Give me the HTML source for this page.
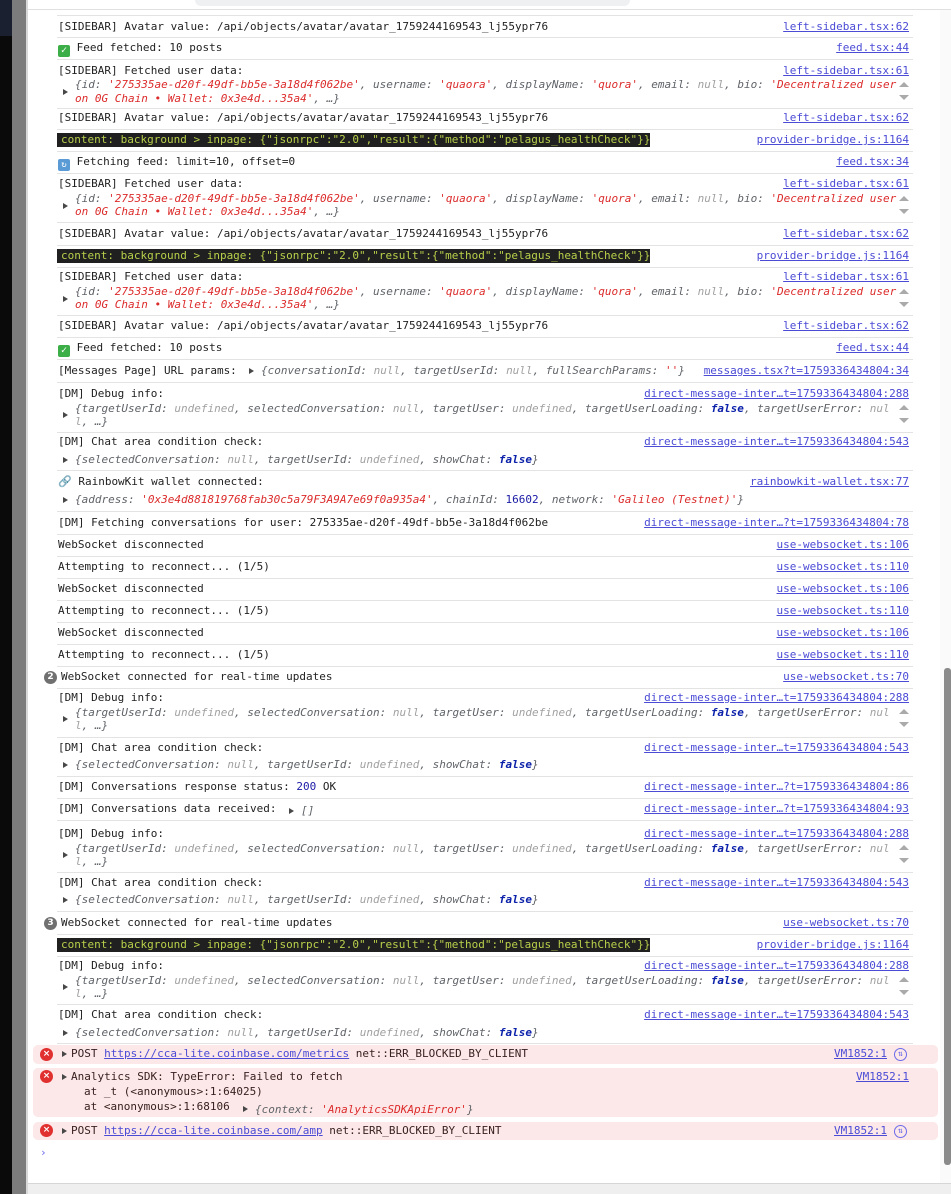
<!DOCTYPE html>
<html><head><meta charset="utf-8"><style>
*{margin:0;padding:0;box-sizing:border-box}
body{width:951px;height:1194px;position:relative;overflow:hidden;background:#fff;font-family:"DejaVu Sans Mono","Liberation Mono",monospace;font-size:11px;color:#1f1f1f}
.a{position:absolute}
.l{position:absolute;white-space:pre;line-height:14px;left:58px}
.o{left:75px;font-style:italic;color:#5f6368}
.k{position:absolute;right:42px;white-space:pre;line-height:14px;color:#4b4bd6;text-decoration:underline}
.s{color:#dc2b2b}.n{color:#a0a0a0}.b{color:#0d22aa;font-weight:bold}.num{color:#1a1aa6;font-style:normal}
.sep{position:absolute;left:57px;width:856px;height:1px;background:#e3e3e3}
.tri{position:absolute;left:63px;width:0;height:0;border-left:5px solid #474747;border-top:3.5px solid transparent;border-bottom:3.5px solid transparent}
.dark{position:absolute;left:57px;height:14px;background:#202020;color:#b8d04a;line-height:14px;white-space:pre;padding-left:4px}
.sa{position:absolute;left:899px;width:0;height:0;border-left:5px solid transparent;border-right:5px solid transparent}
.err{position:absolute;left:33px;width:905px;background:#fce8e8;border-radius:5px}
.ei{position:absolute;left:40px;width:13px;height:13px;border-radius:50%;background:#e0302f;color:#fff;font-size:9px;line-height:13px;text-align:center;font-family:"DejaVu Sans",sans-serif;font-weight:bold}
.badge{position:absolute;left:44px;width:13px;height:13px;border-radius:50%;background:#707070;color:#fff;font-size:9px;line-height:13px;text-align:center;font-family:"DejaVu Sans",sans-serif;font-weight:bold}
.et{color:#3a2020}
</style></head><body>
<div class="a" style="left:0;top:0;width:12px;height:1194px;background:#0a0a0a"></div>
<div class="a" style="left:0;top:0;width:12px;height:36px;background:#1b2030"></div>
<div class="a" style="left:12px;top:0;width:14px;height:1194px;background:#7c7c7c"></div>
<div class="a" style="left:26px;top:0;width:2px;height:1194px;background:#d8d8d8"></div>
<div class="a" style="left:195px;top:0;width:435px;height:6px;background:#eef0f2;border-radius:0 0 6px 6px"></div>
<div class="a" style="left:28px;top:9px;width:923px;height:1px;background:#e0e0e0"></div>
<div class="a" style="left:940px;top:10px;width:11px;height:1175px;background:#fafafa"></div>
<div class="a" style="left:944px;top:668px;width:7px;height:497px;background:#8a8a8a;border-radius:3px"></div>
<div class="a" style="left:28px;top:1183px;width:923px;height:11px;background:#efefef;border-top:1px solid #d6d6d6"></div>

<div class="sep" style="top:15px"></div><div class="sep" style="top:37px"></div><div class="sep" style="top:59px"></div><div class="sep" style="top:108px"></div><div class="sep" style="top:129px"></div><div class="sep" style="top:151px"></div><div class="sep" style="top:173px"></div><div class="sep" style="top:222px"></div><div class="sep" style="top:245px"></div><div class="sep" style="top:267px"></div><div class="sep" style="top:315px"></div><div class="sep" style="top:337px"></div><div class="sep" style="top:359px"></div><div class="sep" style="top:382px"></div><div class="sep" style="top:432px"></div><div class="sep" style="top:470px"></div><div class="sep" style="top:511px"></div><div class="sep" style="top:534px"></div><div class="sep" style="top:556px"></div><div class="sep" style="top:578px"></div><div class="sep" style="top:600px"></div><div class="sep" style="top:622px"></div><div class="sep" style="top:644px"></div><div class="sep" style="top:666px"></div><div class="sep" style="top:688px"></div><div class="sep" style="top:737px"></div><div class="sep" style="top:776px"></div><div class="sep" style="top:798px"></div><div class="sep" style="top:820px"></div><div class="sep" style="top:872px"></div><div class="sep" style="top:911px"></div><div class="sep" style="top:934px"></div><div class="sep" style="top:956px"></div><div class="sep" style="top:1004px"></div><div class="sep" style="top:1043px"></div>

<div class="l" style="top:20px">[SIDEBAR] Avatar value: /api/objects/avatar/avatar_1759244169543_lj55ypr76</div><div class="k" style="top:20px">left-sidebar.tsx:62</div>
<div class="l" style="top:41px"><span style="display:inline-block;width:12px;height:12px;background:#3cae47;color:#fff;border-radius:2px;text-align:center;line-height:12px;font-size:10px;vertical-align:-2px">✓</span> Feed fetched: 10 posts</div><div class="k" style="top:41px">feed.tsx:44</div>
<div class="l" style="top:64px">[SIDEBAR] Fetched user data:</div><div class="k" style="top:64px">left-sidebar.tsx:61</div>
<div class="tri" style="top:89px"></div>
<div class="l o" style="top:78px">{id: <span class="s">'275335ae-d20f-49df-bb5e-3a18d4f062be'</span>, username: <span class="s">'quaora'</span>, displayName: <span class="s">'quora'</span>, email: <span class="n">null</span>, bio: <span class="s">'Decentralized user</span></div>
<div class="l o" style="top:92px"><span class="s">on 0G Chain • Wallet: 0x3e4d...35a4'</span>, …}</div>
<div class="sa" style="top:82px;border-bottom:5px solid #aaa"></div><div class="sa" style="top:95px;border-top:5px solid #aaa"></div>
<div class="l" style="top:111px">[SIDEBAR] Avatar value: /api/objects/avatar/avatar_1759244169543_lj55ypr76</div><div class="k" style="top:111px">left-sidebar.tsx:62</div>
<div class="dark" style="top:133px">content: background &gt; inpage: {"jsonrpc":"2.0","result":{"method":"pelagus_healthCheck"}}</div><div class="k" style="top:133px">provider-bridge.js:1164</div>
<div class="l" style="top:155px"><span style="display:inline-block;width:12px;height:12px;background:#5b9bd5;color:#fff;border-radius:2px;text-align:center;line-height:12px;font-size:9px;vertical-align:-2px">↻</span> Fetching feed: limit=10, offset=0</div><div class="k" style="top:155px">feed.tsx:34</div>
<div class="l" style="top:177px">[SIDEBAR] Fetched user data:</div><div class="k" style="top:177px">left-sidebar.tsx:61</div>
<div class="tri" style="top:203px"></div>
<div class="l o" style="top:192px">{id: <span class="s">'275335ae-d20f-49df-bb5e-3a18d4f062be'</span>, username: <span class="s">'quaora'</span>, displayName: <span class="s">'quora'</span>, email: <span class="n">null</span>, bio: <span class="s">'Decentralized user</span></div>
<div class="l o" style="top:205px"><span class="s">on 0G Chain • Wallet: 0x3e4d...35a4'</span>, …}</div>
<div class="sa" style="top:196px;border-bottom:5px solid #aaa"></div><div class="sa" style="top:209px;border-top:5px solid #aaa"></div>
<div class="l" style="top:227px">[SIDEBAR] Avatar value: /api/objects/avatar/avatar_1759244169543_lj55ypr76</div><div class="k" style="top:227px">left-sidebar.tsx:62</div>
<div class="dark" style="top:249px">content: background &gt; inpage: {"jsonrpc":"2.0","result":{"method":"pelagus_healthCheck"}}</div><div class="k" style="top:249px">provider-bridge.js:1164</div>
<div class="l" style="top:270px">[SIDEBAR] Fetched user data:</div><div class="k" style="top:270px">left-sidebar.tsx:61</div>
<div class="tri" style="top:296px"></div>
<div class="l o" style="top:285px">{id: <span class="s">'275335ae-d20f-49df-bb5e-3a18d4f062be'</span>, username: <span class="s">'quaora'</span>, displayName: <span class="s">'quora'</span>, email: <span class="n">null</span>, bio: <span class="s">'Decentralized user</span></div>
<div class="l o" style="top:298px"><span class="s">on 0G Chain • Wallet: 0x3e4d...35a4'</span>, …}</div>
<div class="sa" style="top:289px;border-bottom:5px solid #aaa"></div><div class="sa" style="top:302px;border-top:5px solid #aaa"></div>
<div class="l" style="top:319px">[SIDEBAR] Avatar value: /api/objects/avatar/avatar_1759244169543_lj55ypr76</div><div class="k" style="top:319px">left-sidebar.tsx:62</div>
<div class="l" style="top:341px"><span style="display:inline-block;width:12px;height:12px;background:#3cae47;color:#fff;border-radius:2px;text-align:center;line-height:12px;font-size:10px;vertical-align:-2px">✓</span> Feed fetched: 10 posts</div><div class="k" style="top:341px">feed.tsx:44</div>
<div class="l" style="top:364px">[Messages Page] URL params:</div><div class="tri" style="left:249px;top:368px"></div><div class="l o" style="left:261px;top:364px">{conversationId: <span class="n">null</span>, targetUserId: <span class="n">null</span>, fullSearchParams: <span class="s">''</span>}</div><div class="k" style="top:364px">messages.tsx?t=1759336434804:34</div>
<div class="l" style="top:387px">[DM] Debug info:</div><div class="k" style="top:387px">direct-message-inter…t=1759336434804:288</div>
<div class="tri" style="top:412px"></div>
<div class="l o" style="top:402px">{targetUserId: <span class="n">undefined</span>, selectedConversation: <span class="n">null</span>, targetUser: <span class="n">undefined</span>, targetUserLoading: <span class="b">false</span>, targetUserError: <span class="n">nul</span></div>
<div class="l o" style="top:415px"><span class="n">l</span>, …}</div>
<div class="sa" style="top:405px;border-bottom:5px solid #aaa"></div><div class="sa" style="top:418px;border-top:5px solid #aaa"></div>
<div class="l" style="top:435px">[DM] Chat area condition check:</div><div class="k" style="top:435px">direct-message-inter…t=1759336434804:543</div>
<div class="tri" style="top:457px"></div><div class="l o" style="top:453px">{selectedConversation: <span class="n">null</span>, targetUserId: <span class="n">undefined</span>, showChat: <span class="b">false</span>}</div>
<div class="l" style="top:475px"><span style="color:#6a9ec9">🔗</span> RainbowKit wallet connected:</div><div class="k" style="top:475px">rainbowkit-wallet.tsx:77</div>
<div class="tri" style="top:497px"></div><div class="l o" style="top:493px">{address: <span class="s">'0x3e4d881819768fab30c5a79F3A9A7e69f0a935a4'</span>, chainId: <span class="num">16602</span>, network: <span class="s">'Galileo (Testnet)'</span>}</div>
<div class="l" style="top:516px">[DM] Fetching conversations for user: 275335ae-d20f-49df-bb5e-3a18d4f062be</div><div class="k" style="top:516px">direct-message-inter…?t=1759336434804:78</div>
<div class="l" style="top:538px">WebSocket disconnected</div><div class="k" style="top:538px">use-websocket.ts:106</div>
<div class="l" style="top:560px">Attempting to reconnect... (1/5)</div><div class="k" style="top:560px">use-websocket.ts:110</div>
<div class="l" style="top:582px">WebSocket disconnected</div><div class="k" style="top:582px">use-websocket.ts:106</div>
<div class="l" style="top:604px">Attempting to reconnect... (1/5)</div><div class="k" style="top:604px">use-websocket.ts:110</div>
<div class="l" style="top:626px">WebSocket disconnected</div><div class="k" style="top:626px">use-websocket.ts:106</div>
<div class="l" style="top:648px">Attempting to reconnect... (1/5)</div><div class="k" style="top:648px">use-websocket.ts:110</div>
<div class="badge" style="top:671px">2</div><div class="l" style="left:61px;top:670px">WebSocket connected for real-time updates</div><div class="k" style="top:670px">use-websocket.ts:70</div>
<div class="l" style="top:691px">[DM] Debug info:</div><div class="k" style="top:691px">direct-message-inter…t=1759336434804:288</div>
<div class="tri" style="top:716px"></div>
<div class="l o" style="top:706px">{targetUserId: <span class="n">undefined</span>, selectedConversation: <span class="n">null</span>, targetUser: <span class="n">undefined</span>, targetUserLoading: <span class="b">false</span>, targetUserError: <span class="n">nul</span></div>
<div class="l o" style="top:719px"><span class="n">l</span>, …}</div>
<div class="sa" style="top:709px;border-bottom:5px solid #aaa"></div><div class="sa" style="top:722px;border-top:5px solid #aaa"></div>
<div class="l" style="top:741px">[DM] Chat area condition check:</div><div class="k" style="top:741px">direct-message-inter…t=1759336434804:543</div>
<div class="tri" style="top:762px"></div><div class="l o" style="top:758px">{selectedConversation: <span class="n">null</span>, targetUserId: <span class="n">undefined</span>, showChat: <span class="b">false</span>}</div>
<div class="l" style="top:780px">[DM] Conversations response status: <span class="num">200</span> OK</div><div class="k" style="top:780px">direct-message-inter…?t=1759336434804:86</div>
<div class="l" style="top:802px">[DM] Conversations data received:</div><div class="tri" style="left:289px;top:808px"></div><div class="l o" style="left:301px;top:804px">[]</div><div class="k" style="top:802px">direct-message-inter…?t=1759336434804:93</div>
<div class="l" style="top:827px">[DM] Debug info:</div><div class="k" style="top:827px">direct-message-inter…t=1759336434804:288</div>
<div class="tri" style="top:852px"></div>
<div class="l o" style="top:842px">{targetUserId: <span class="n">undefined</span>, selectedConversation: <span class="n">null</span>, targetUser: <span class="n">undefined</span>, targetUserLoading: <span class="b">false</span>, targetUserError: <span class="n">nul</span></div>
<div class="l o" style="top:855px"><span class="n">l</span>, …}</div>
<div class="sa" style="top:845px;border-bottom:5px solid #aaa"></div><div class="sa" style="top:858px;border-top:5px solid #aaa"></div>
<div class="l" style="top:876px">[DM] Chat area condition check:</div><div class="k" style="top:876px">direct-message-inter…t=1759336434804:543</div>
<div class="tri" style="top:897px"></div><div class="l o" style="top:893px">{selectedConversation: <span class="n">null</span>, targetUserId: <span class="n">undefined</span>, showChat: <span class="b">false</span>}</div>
<div class="badge" style="top:917px">3</div><div class="l" style="left:61px;top:916px">WebSocket connected for real-time updates</div><div class="k" style="top:916px">use-websocket.ts:70</div>
<div class="dark" style="top:938px">content: background &gt; inpage: {"jsonrpc":"2.0","result":{"method":"pelagus_healthCheck"}}</div><div class="k" style="top:938px">provider-bridge.js:1164</div>
<div class="l" style="top:959px">[DM] Debug info:</div><div class="k" style="top:959px">direct-message-inter…t=1759336434804:288</div>
<div class="tri" style="top:984px"></div>
<div class="l o" style="top:974px">{targetUserId: <span class="n">undefined</span>, selectedConversation: <span class="n">null</span>, targetUser: <span class="n">undefined</span>, targetUserLoading: <span class="b">false</span>, targetUserError: <span class="n">nul</span></div>
<div class="l o" style="top:987px"><span class="n">l</span>, …}</div>
<div class="sa" style="top:977px;border-bottom:5px solid #aaa"></div><div class="sa" style="top:990px;border-top:5px solid #aaa"></div>
<div class="l" style="top:1008px">[DM] Chat area condition check:</div><div class="k" style="top:1008px">direct-message-inter…t=1759336434804:543</div>
<div class="tri" style="top:1030px"></div><div class="l o" style="top:1026px">{selectedConversation: <span class="n">null</span>, targetUserId: <span class="n">undefined</span>, showChat: <span class="b">false</span>}</div>

<div class="err" style="top:1045px;height:19px"></div>
<div class="ei" style="top:1048px">×</div><div class="tri" style="left:62px;top:1051px"></div>
<div class="l et" style="left:71px;top:1047px">POST <span style="color:#4b4bd6;text-decoration:underline">https://cca-lite.coinbase.com/metrics</span> net::ERR_BLOCKED_BY_CLIENT</div>
<div class="k" style="right:64px;top:1047px">VM1852:1</div>
<div class="a" style="left:894px;top:1048px;width:13px;height:13px;border:1.5px solid #6b6bea;border-radius:50%;color:#6b6bea;font-size:8px;line-height:10px;text-align:center">⇅</div>

<div class="err" style="top:1068px;height:49px"></div>
<div class="ei" style="top:1070px">×</div><div class="tri" style="left:62px;top:1074px"></div>
<div class="l et" style="left:71px;top:1070px">Analytics SDK: TypeError: Failed to fetch</div>
<div class="k" style="top:1070px">VM1852:1</div>
<div class="l et" style="left:84px;top:1085px">at _t (&lt;anonymous&gt;:1:64025)</div>
<div class="l et" style="left:84px;top:1100px">at &lt;anonymous&gt;:1:68106</div>
<div class="tri" style="left:243px;top:1106px"></div><div class="l o" style="left:255px;top:1103px">{context: <span class="s">'AnalyticsSDKApiError'</span>}</div>

<div class="err" style="top:1122px;height:18px"></div>
<div class="ei" style="top:1124px">×</div><div class="tri" style="left:62px;top:1128px"></div>
<div class="l et" style="left:71px;top:1124px">POST <span style="color:#4b4bd6;text-decoration:underline">https://cca-lite.coinbase.com/amp</span> net::ERR_BLOCKED_BY_CLIENT</div>
<div class="k" style="right:64px;top:1124px">VM1852:1</div>
<div class="a" style="left:894px;top:1125px;width:13px;height:13px;border:1.5px solid #6b6bea;border-radius:50%;color:#6b6bea;font-size:8px;line-height:10px;text-align:center">⇅</div>

<div class="l" style="left:40px;top:1146px;color:#6b6bea">›</div>
</body></html>
